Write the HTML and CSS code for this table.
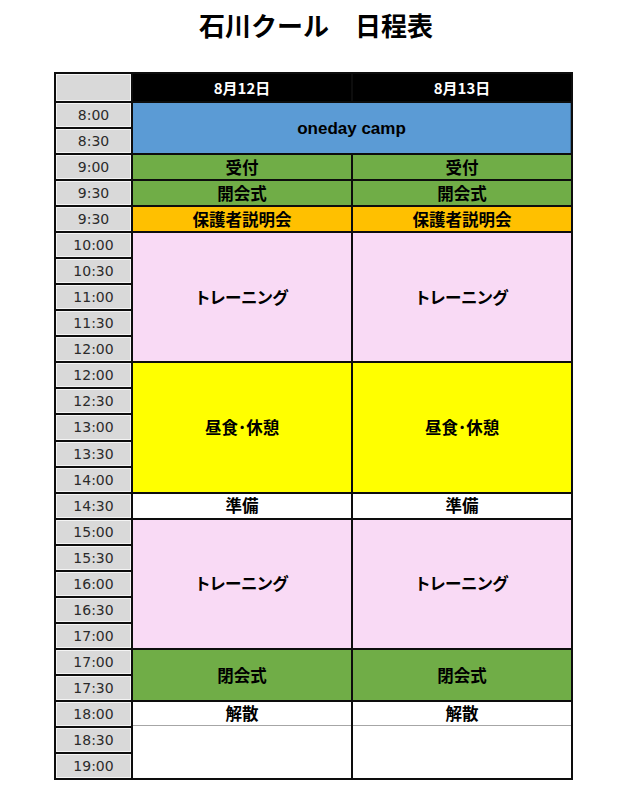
FILE: index.html
```html
<!DOCTYPE html>
<html lang="ja">
<head>
<meta charset="utf-8">
<title>石川クール 日程表</title>
<link rel="stylesheet" href="styles.css">
</head>
<body>
<h1 class="title">石川クール　日程表</h1>
<div class="schedule">
  <div class="time"></div>
  <div class="day-head">8月12日</div>
  <div class="day-head">8月13日</div>

  <div class="time">8:00</div>
  <div class="cell blue wide span2 latin">oneday camp</div>
  <div class="time">8:30</div>

  <div class="time">9:00</div>
  <div class="cell green">受付</div>
  <div class="cell green">受付</div>

  <div class="time">9:30</div>
  <div class="cell green">開会式</div>
  <div class="cell green">開会式</div>

  <div class="time">9:30</div>
  <div class="cell orange">保護者説明会</div>
  <div class="cell orange">保護者説明会</div>

  <div class="time">10:00</div>
  <div class="cell pink span5">トレーニング</div>
  <div class="cell pink span5">トレーニング</div>
  <div class="time">10:30</div>
  <div class="time">11:00</div>
  <div class="time">11:30</div>
  <div class="time">12:00</div>

  <div class="time">12:00</div>
  <div class="cell yellow span5">昼食･休憩</div>
  <div class="cell yellow span5">昼食･休憩</div>
  <div class="time">12:30</div>
  <div class="time">13:00</div>
  <div class="time">13:30</div>
  <div class="time">14:00</div>

  <div class="time">14:30</div>
  <div class="cell white">準備</div>
  <div class="cell white">準備</div>

  <div class="time">15:00</div>
  <div class="cell pink span5">トレーニング</div>
  <div class="cell pink span5">トレーニング</div>
  <div class="time">15:30</div>
  <div class="time">16:00</div>
  <div class="time">16:30</div>
  <div class="time">17:00</div>

  <div class="time">17:00</div>
  <div class="cell green span2">閉会式</div>
  <div class="cell green span2">閉会式</div>
  <div class="time">17:30</div>

  <div class="time">18:00</div>
  <div class="end span3">
    <div class="end-label">解散</div>
    <div class="end-blank"></div>
  </div>
  <div class="end span3">
    <div class="end-label">解散</div>
    <div class="end-blank"></div>
  </div>
  <div class="time">18:30</div>
  <div class="time">19:00</div>
</div>
</body>
</html>
```

FILE: styles.css
```css
* {
  box-sizing: border-box;
}

html, body {
  margin: 0;
  padding: 0;
  background: #ffffff;
}

body {
  font-family: "Noto Sans CJK JP", "Noto Sans", sans-serif;
  color: #000;
}

.title {
  margin: 12px 0 34px;
  font-size: 26px;
  line-height: 26px;
  font-weight: 700;
  text-align: center;
  color: #000;
}

.schedule {
  box-sizing: content-box;
  margin-left: 54px;
  width: 515px;
  height: 704px;
  padding: 2px;
  background: #0d0d0d;
  display: grid;
  grid-template-columns: 75px 218px 218px;
  grid-template-rows: 27px repeat(26, 1fr);
  column-gap: 2px;
  row-gap: 2px;
}

.time {
  background: #d9d9d9;
  border: 1px solid #f4f4f4;
  display: flex;
  align-items: center;
  justify-content: center;
  font-family: "DejaVu Sans", Verdana, sans-serif;
  font-size: 14px;
  color: #2b2b2b;
  line-height: 1;
}

.day-head {
  background: #000;
  color: #fff;
  display: flex;
  align-items: center;
  justify-content: center;
  font-size: 15px;
  font-weight: 700;
  line-height: 1;
}

.cell {
  display: flex;
  align-items: center;
  justify-content: center;
  font-size: 16.5px;
  font-weight: 700;
  line-height: 1;
  font-feature-settings: "palt";
}

.latin {
  font-family: "Liberation Sans", Arial, sans-serif;
  font-size: 17px;
}

.wide { grid-column: span 2; }
.span2 { grid-row: span 2; }
.span3 { grid-row: span 3; }
.span5 { grid-row: span 5; }

.blue { background: #5b9bd5; border-right: 1px solid #41719c; }
.green { background: #70ad47; }
.orange { background: #ffc000; }
.pink { background: #f9daf5; }
.yellow { background: #ffff00; }
.white { background: #ffffff; }

.end {
  background: #ffffff;
  display: flex;
  flex-direction: column;
}

.end-label {
  flex: 0 0 24px;
  display: flex;
  align-items: center;
  justify-content: center;
  border-bottom: 1px solid #a6a6a6;
  font-size: 16.5px;
  font-weight: 700;
  line-height: 1;
}

.end-blank {
  flex: 1;
}
```
